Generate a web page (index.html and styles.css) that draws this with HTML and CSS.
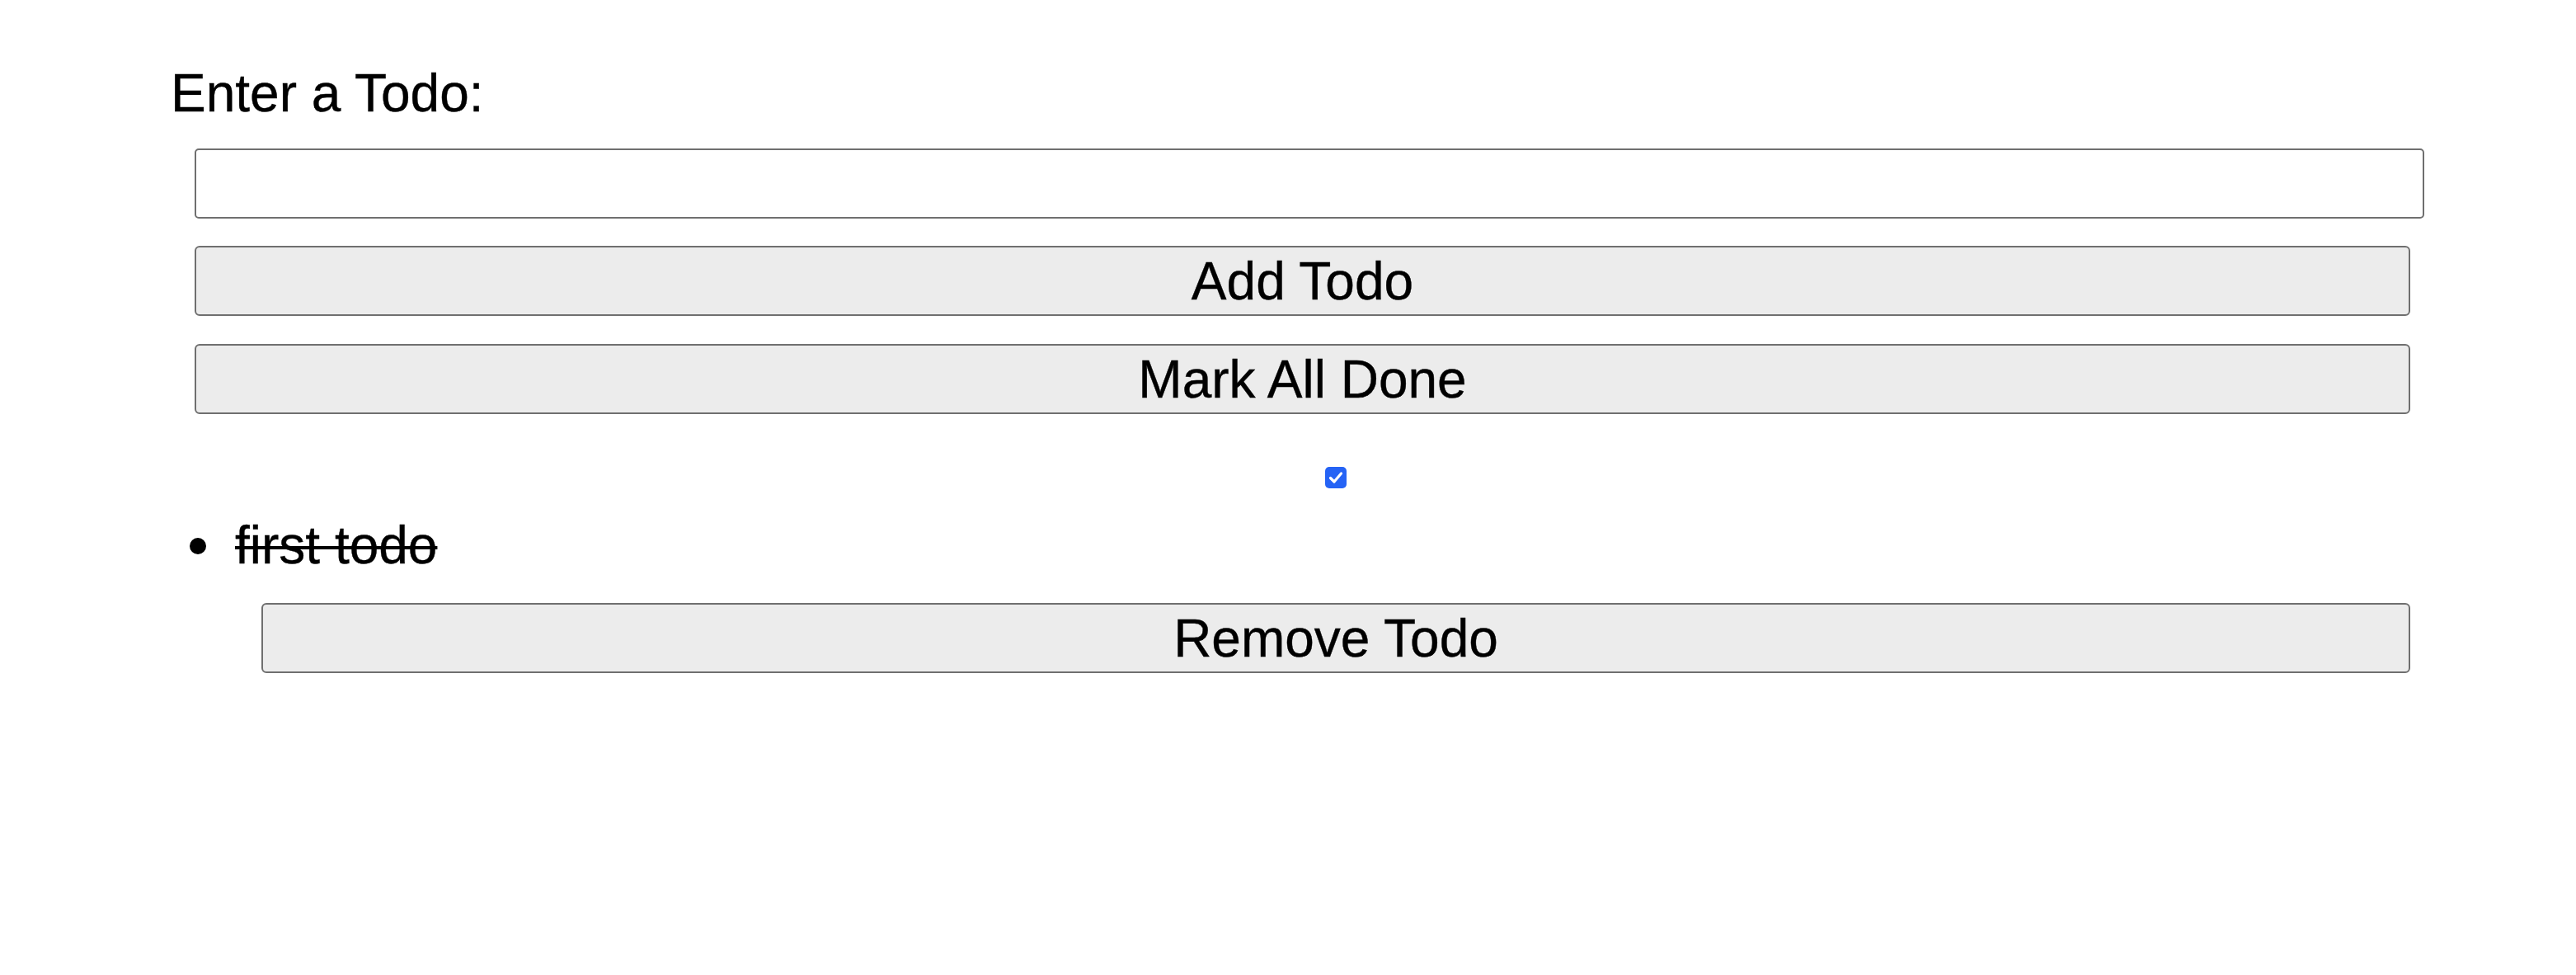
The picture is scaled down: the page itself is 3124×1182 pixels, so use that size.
FILE: index.html
```html
<!DOCTYPE html>
<html>
<head>
<meta charset="utf-8">
<link rel="stylesheet" href="styles.css">
</head>
<body>
<div class="app">
  <label class="label" for="todo">Enter a Todo:</label>
  <div class="form">
    <input id="todo" class="field" type="text">
    <button class="btn">Add Todo</button>
    <button class="btn btn-gap">Mark All Done</button>
  </div>
  <div class="list-area">
    <div class="check-row">
      <span class="check" role="checkbox" aria-checked="true">
        <svg viewBox="0 0 26 26" width="26" height="26"><rect width="26" height="26" rx="5" fill="#2563f5"/><path d="M6.5 13.5 L11 18 L19.5 8" fill="none" stroke="#fff" stroke-width="3.2" stroke-linecap="round" stroke-linejoin="round"/></svg>
      </span>
    </div>
    <ul class="todos">
      <li class="todo">
        <span class="todo-text">first todo</span>
        <button class="btn btn-remove">Remove Todo</button>
      </li>
    </ul>
  </div>
</div>
</body>
</html>
```
FILE: styles.css
```css
html, body {
  margin: 0;
  padding: 0;
  background: #ffffff;
}
body {
  font-family: "Liberation Sans", Arial, Helvetica, sans-serif;
  color: #000;
}
.app {
  padding: 77px 0 0 207px;
}
.label {
  display: block;
  font-size: 64px;
  line-height: 72px;
  height: 72px;
  -webkit-text-stroke: 0.4px #000;
}
.form {
  display: flex;
  flex-direction: column;
  align-items: flex-start;
  padding-left: 29px;
}
.field {
  box-sizing: border-box;
  margin: 31px 0 0 0;
  width: 2704px;
  height: 85px;
  border: 2px solid #6f6f6f;
  border-radius: 5px;
  background: #fff;
  font-size: 64px;
  font-family: inherit;
  padding: 0 10px;
}
.btn {
  box-sizing: border-box;
  margin: 33px 0 0 0;
  width: 2687px;
  height: 85px;
  border: 2px solid #6f6f6f;
  border-radius: 6px;
  background: #ececec;
  font-family: "Liberation Sans", Arial, Helvetica, sans-serif;
  font-size: 64px;
  color: #000;
  -webkit-text-stroke: 0.4px #000;
  display: flex;
  align-items: center;
  justify-content: center;
  padding: 0;
}
.btn-gap {
  margin-top: 34px;
}
.check-row {
  margin-top: 64px;
  margin-left: 110px;
  width: 2606px;
  display: flex;
  justify-content: center;
  height: 26px;
}
.check {
  display: block;
  width: 26px;
  height: 26px;
}
.check svg {
  display: block;
}
.todos {
  list-style: none;
  margin: 33px 0 0 0;
  padding: 0;
}
.todo {
  display: flex;
  flex-direction: column;
  align-items: flex-start;
}
.todo-text {
  position: relative;
  display: block;
  font-size: 64px;
  line-height: 72px;
  height: 72px;
  margin-left: 78px;
  text-decoration: line-through;
  text-decoration-thickness: 4px;
  -webkit-text-stroke: 0.4px #000;
}
.todo-text::before {
  content: "";
  position: absolute;
  left: -55px;
  top: 27px;
  width: 20px;
  height: 20px;
  border-radius: 50%;
  background: #000;
}
.btn-remove {
  margin: 34px 0 0 110px;
  width: 2606px;
}
```
